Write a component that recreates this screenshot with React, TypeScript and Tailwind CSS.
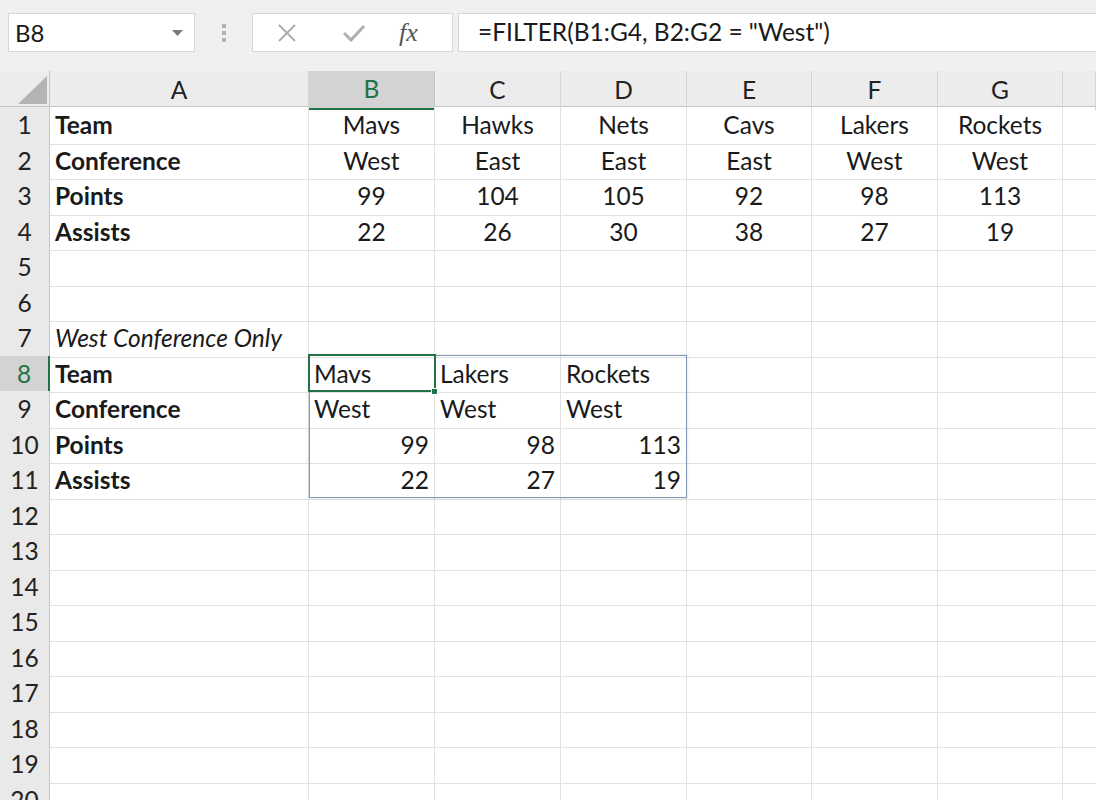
import React from "react";

const colW = [50, 259, 126, 126, 126, 125, 126, 125];
const colLetters = ["A", "B", "C", "D", "E", "F", "G", ""];

type Cell = { t: string; align?: "l" | "c" | "r"; b?: boolean; i?: boolean };

const data: Record<number, Cell[]> = {
  1: [{ t: "Team", b: true }, ...["Mavs", "Hawks", "Nets", "Cavs", "Lakers", "Rockets"].map((t) => ({ t, align: "c" as const }))],
  2: [{ t: "Conference", b: true }, ...["West", "East", "East", "East", "West", "West"].map((t) => ({ t, align: "c" as const }))],
  3: [{ t: "Points", b: true }, ...["99", "104", "105", "92", "98", "113"].map((t) => ({ t, align: "c" as const }))],
  4: [{ t: "Assists", b: true }, ...["22", "26", "30", "38", "27", "19"].map((t) => ({ t, align: "c" as const }))],
  7: [{ t: "West Conference Only", i: true }],
  8: [{ t: "Team", b: true }, ...["Mavs", "Lakers", "Rockets"].map((t) => ({ t, align: "l" as const }))],
  9: [{ t: "Conference", b: true }, ...["West", "West", "West"].map((t) => ({ t, align: "l" as const }))],
  10: [{ t: "Points", b: true }, ...["99", "98", "113"].map((t) => ({ t, align: "r" as const }))],
  11: [{ t: "Assists", b: true }, ...["22", "27", "19"].map((t) => ({ t, align: "r" as const }))],
};

const rows = Array.from({ length: 20 }, (_, i) => i + 1);
const gridCols = "grid-cols-[50px_259px_126px_126px_126px_125px_126px_125px_1fr]";

export default function App() {
  return (
    <div
      className="w-[1096px] h-[800px] overflow-hidden bg-white text-[#1a1a1a]"
      style={{ fontFamily: "Lato, 'Liberation Sans', sans-serif" }}
    >
      {/* Formula bar */}
      <div className="h-[71px] bg-[#f0f0f0] flex items-start pt-[13px]">
        <div className="ml-[8px] w-[187px] h-[39px] bg-white border border-[#d6d6d6] flex items-center justify-between pl-[6px] pr-[11px]">
          <span className="text-[24px] leading-none">B8</span>
          <svg width="11" height="6" viewBox="0 0 11 6">
            <path d="M0 0 L11 0 L5.5 6 Z" fill="#7a7a7a" />
          </svg>
        </div>
        <div className="w-[57px] h-[39px] flex items-center justify-center">
          <div className="flex flex-col gap-[3px]">
            <div className="w-[4px] h-[4px] bg-[#b5b5b5]" />
            <div className="w-[4px] h-[4px] bg-[#b5b5b5]" />
            <div className="w-[4px] h-[4px] bg-[#b5b5b5]" />
          </div>
        </div>
        <div className="w-[201px] h-[39px] bg-white border border-[#d6d6d6] flex items-center">
          <svg className="ml-[24px]" width="20" height="20" viewBox="0 0 20 20">
            <path d="M2 2 L18 18 M18 2 L2 18" stroke="#ababab" strokeWidth="1.8" fill="none" />
          </svg>
          <svg className="ml-[46px]" width="22" height="18" viewBox="0 0 22 18">
            <path d="M1 9 L8 16 L21 2" stroke="#b0b0b0" strokeWidth="3" fill="none" />
          </svg>
          <span
            className="ml-[34px] text-[26px] italic text-[#555] leading-none"
            style={{ fontFamily: "'Liberation Serif', serif" }}
          >
            fx
          </span>
        </div>
        <div className="ml-[5px] flex-1 h-[39px] bg-white border border-[#d6d6d6] border-r-0 flex items-center pl-[19px]">
          <span className="text-[24.5px] leading-none">=FILTER(B1:G4, B2:G2 = "West")</span>
        </div>
      </div>

      {/* Grid */}
      <div className="relative">
        {/* Column headers */}
        <div className={`grid ${gridCols} h-[36px] bg-[#ececec] border-b border-[#c6c6c6]`}>
          <div className="relative border-r border-[#c6c6c6]">
            <svg className="absolute left-[18px] top-[5px]" width="29" height="28" viewBox="0 0 29 28">
              <path d="M29 0 L29 28 L0 28 Z" fill="#b4b4b4" />
            </svg>
          </div>
          {colLetters.map((l, i) =>
            i === 1 ? (
              <div
                key={i}
                className="bg-[#d3d3d3] border-r border-[#c6c6c6] border-b-2 border-b-[#217346] text-[#217346] flex items-center justify-center text-[24.5px]"
              >
                {l}
              </div>
            ) : (
              <div key={i} className="border-r border-[#d4d4d4] flex items-center justify-center text-[24.5px] text-[#222]">
                {l}
              </div>
            )
          )}
        </div>

        {/* Rows */}
        {rows.map((r) => {
          const cells = data[r] || [];
          const sel = r === 8;
          return (
            <div key={r} className={`grid ${gridCols} h-[35.5px]`}>
              <div
                className={
                  sel
                    ? "bg-[#d3d3d3] border-b border-[#c6c6c6] border-r-2 border-r-[#217346] text-[#217346] flex items-center justify-center text-[24.5px]"
                    : "bg-[#e9e9e9] border-b border-[#d2d2d2] border-r border-r-[#c6c6c6] text-[#222] flex items-center justify-center text-[24.5px]"
                }
              >
                {r}
              </div>
              {colW.slice(1).map((_, ci) => {
                const c = cells[ci];
                return (
                  <div
                    key={ci}
                    className={`border-r border-b border-[#e1e1e1] flex items-center px-[5px] whitespace-nowrap overflow-visible text-[24.5px] ${
                      c?.align === "c" ? "justify-center" : c?.align === "r" ? "justify-end" : "justify-start"
                    } ${c?.b ? "font-bold" : ""} ${c?.i ? "italic" : ""}`}
                  >
                    {c?.t}
                  </div>
                );
              })}
              <div className="border-b border-[#e1e1e1]" />
            </div>
          );
        })}

        {/* Spill range border */}
        <div className="absolute left-[309px] top-[284px] w-[378px] h-[142.5px] border border-[#8197b8] shadow-[0_0_3px_rgba(0,0,0,0.15)] pointer-events-none" />
        {/* Active cell */}
        <div className="absolute left-[308px] top-[283px] w-[128px] h-[37.5px] border-2 border-[#217346] pointer-events-none" />
        {/* Fill handle */}
        <div className="absolute left-[431px] top-[316.5px] w-[7px] h-[7px] bg-[#217346] border border-white pointer-events-none" />
      </div>
    </div>
  );
}
